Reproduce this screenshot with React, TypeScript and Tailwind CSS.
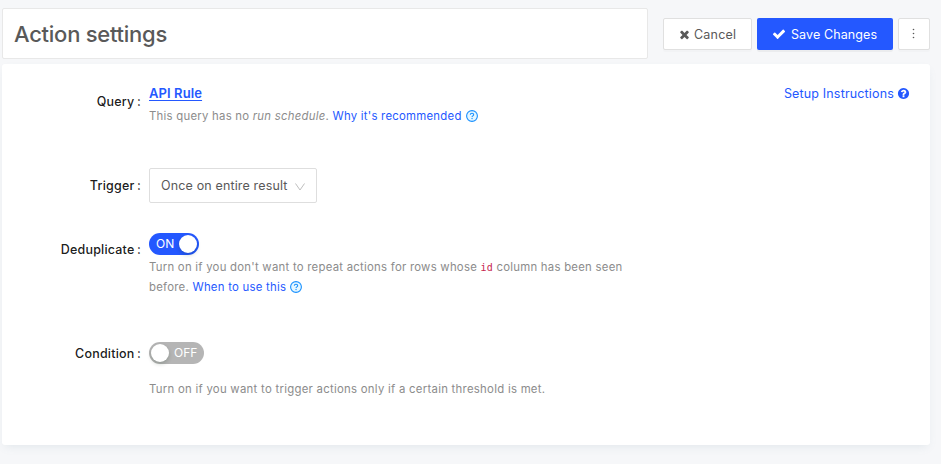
import type { ReactNode } from "react";

function Glyph({ d, className }: { d: string; className: string }) {
  return (
    <svg viewBox="0 0 1792 1792" fill="currentColor" className={className} aria-hidden="true">
      <path d={d} />
    </svg>
  );
}

const TIMES =
  "M1490 1322q0 40-28 68l-136 136q-28 28-68 28t-68-28l-294-294-294 294q-28 28-68 28t-68-28l-136-136q-28-28-28-68t28-68l294-294-294-294q-28-28-28-68t28-68l136-136q28-28 68-28t68 28l294 294 294-294q28-28 68-28t68 28l136 136q28 28 28 68t-28 68l-294 294 294 294q28 28 28 68z";
const CHECK =
  "M1671 566q0 40-28 68l-724 724-136 136q-28 28-68 28t-68-28l-136-136-362-362q-28-28-28-68t28-68l136-136q28-28 68-28t68 28l294 295 656-657q28-28 68-28t68 28l136 136q28 28 28 68z";
const QUESTION =
  "M1024 1376v-192q0-14-9-23t-23-9h-192q-14 0-23 9t-9 23v192q0 14 9 23t23 9h192q14 0 23-9t9-23zm256-672q0-88-55.5-163t-138.5-116-170-41q-243 0-371 213-15 24 8 42l132 100q7 6 19 6 16 0 25-12 53-68 86-92 34-24 86-24 48 0 85.500 26t37.500 59q0 38-20 61t-68 45q-63 28-115.500 86.500t-52.500 125.500v36q0 14 9 23t23 9h192q14 0 23-9t9-23q0-19 21.500-49.500t54.500-49.500q32-18 49-28.500t46-35 44.500-48 28-60.500 12.500-81zm384 192q0 209-103 385.500t-279.500 279.500-385.500 103-385.500-103-279.500-279.500-103-385.500 103-385.500 279.500-279.500 385.500-103 385.500 103 279.500 279.500 103 385.500z";

function HelpCircle() {
  return (
    <svg viewBox="0 0 12 12" className="block h-3 w-3" fill="none" aria-hidden="true">
      <circle cx="6" cy="6" r="5.4" fill="#e6f7ff" stroke="#1890ff" strokeWidth="1.1" />
      <path d="M4.3 4.8c0-1 .75-1.6 1.7-1.6s1.7.6 1.7 1.5c0 1.2-1.65 1.1-1.65 2.3" stroke="#1890ff" strokeWidth="1.1" />
      <circle cx="6.05" cy="8.5" r=".65" fill="#1890ff" />
    </svg>
  );
}

function Label({ children }: { children: ReactNode }) {
  return (
    <div className="flex w-[139px] shrink-0 justify-end pt-px text-[12.500px] leading-5 font-medium tracking-[0.2px] text-black/90">
      <span>{children}</span>
      <span className="ml-[2.500px]">:</span>
    </div>
  );
}

export default function App() {
  return (
    <div className="h-[464px] w-[941px] overflow-hidden bg-[#f6f7f9] pt-2 pl-[2px] font-['Inter','Liberation_Sans',sans-serif] text-[12.500px] text-[#595959]">
      <header className="flex h-[51px] w-[928px]">
        <div className="flex h-[51px] w-[646px] items-center rounded-[2px] border border-[#e8e8e8] bg-white pl-[11px]">
          <h1 className="text-[22px] leading-7 font-medium tracking-[-0.26px] text-[#595959]">Action settings</h1>
        </div>
        <div className="mt-[10px] ml-[15px] flex h-8 gap-[5px]">
          <button className="flex w-[89px] items-center rounded-[2px] border border-[#e0e0e0] bg-white pl-[14px] shadow-[0_2px_0_rgba(0,0,0,0.015)]">
            <Glyph d={TIMES} className="h-[13px] w-[13px]" />
            <span className="ml-[3px] pt-[3px] tracking-[0.2px]">Cancel</span>
          </button>
          <button className="flex w-[136px] items-center rounded-[2px] bg-[#2458ff] pl-[15px] text-white shadow-[0_2px_0_rgba(0,0,0,0.045)]">
            <Glyph d={CHECK} className="h-[14px] w-[14px]" />
            <span className="ml-[5px] pt-[3px] tracking-[0.1px]">Save Changes</span>
          </button>
          <button className="flex w-8 items-center justify-center rounded-[2px] border border-[#e0e0e0] bg-white shadow-[0_2px_0_rgba(0,0,0,0.015)]" aria-label="More">
            <svg viewBox="0 0 12 12" className="mb-px h-3 w-3" fill="currentColor">
              <circle cx="5.5" cy="1.500" r=".8" />
              <circle cx="5.5" cy="5.500" r=".8" />
              <circle cx="5.5" cy="9.500" r=".8" />
            </svg>
          </button>
        </div>
      </header>

      <main className="mt-[5px] h-[381px] w-[928px] rounded-[3px] bg-white pt-[19px] shadow-[0_4px_9px_-3px_rgba(102,136,153,0.15)]">
        <section className="flex h-[86px]">
          <div className="pt-2"><Label>Query</Label></div>
          <div className="ml-2 flex-1">
            <a className="block text-[13px] leading-5 font-semibold tracking-[0.1px] text-[#2458ff] underline underline-offset-2">API Rule</a>
            <div className="mt-[3px] flex h-5 items-center text-[11.375px] tracking-[0.25px] text-[#8c8c8c]">
              <span className="pt-[2px] whitespace-pre">This query has no <em>run schedule</em>. <a className="text-[#2458ff]">Why it's recommended</a></span>
              <span className="ml-1"><HelpCircle /></span>
            </div>
          </div>
          <a className="mr-5 flex h-5 items-center text-[#2458ff]">
            <span className="pt-[3px] tracking-[0.16px]">Setup Instructions</span>
            <Glyph d={QUESTION} className="ml-[3px] h-[13px] w-[13px]" />
          </a>
        </section>

        <section className="flex h-[65px]">
          <div className="pt-[6px]"><Label>Trigger</Label></div>
          <div className="-mt-px ml-2 flex h-[35px] w-[168px] items-center rounded-[2px] border border-[#dedede] bg-white pl-[11px]">
            <span className="pt-[2px] tracking-[0.15px]">Once on entire result</span>
            <svg viewBox="0 0 10 8" className="mt-[3px] ml-[7px] h-2 w-[10px]" fill="none" stroke="#bfbfbf">
              <path d="M.5.5 5 7 9.500.5" />
            </svg>
          </div>
        </section>

        <section className="flex h-[109px]">
          <div className="pt-[5px]"><Label>Deduplicate</Label></div>
          <div className="-mt-px ml-2">
            <div className="flex h-[22px] w-[50px] items-center rounded-full bg-[#2458ff] pr-[2px] pl-[7px] text-xs text-white">
              <span>ON</span>
              <span className="ml-auto h-[18px] w-[18px] rounded-full bg-white shadow-[0_2px_4px_rgba(0,35,11,0.2)]" />
            </div>
            <div className="mt-[2px] text-[11.375px] leading-5 tracking-[0.25px] text-[#8c8c8c]">
              <p className="h-[19px] whitespace-pre">Turn on if you don't want to repeat actions for rows whose <code className="font-['DejaVu_Sans_Mono','Liberation_Mono',monospace] text-[10px] text-[#c7254e]">id</code> column has been seen</p>
              <p className="flex items-center">
                <span className="pt-px whitespace-pre">before. <a className="text-[#2458ff]">When to use this</a></span>
                <span className="ml-1"><HelpCircle /></span>
              </p>
            </div>
          </div>
        </section>

        <section className="flex">
          <div><Label>Condition</Label></div>
          <div className="-mt-px ml-2">
            <div className="flex h-[22px] w-[55px] items-center rounded-full bg-[#b5b5b5] pl-[2px] text-xs text-white">
              <span className="h-[18px] w-[18px] rounded-full bg-white shadow-[0_2px_4px_rgba(0,35,11,0.2)]" />
              <span className="ml-[5px]">OFF</span>
            </div>
            <p className="mt-[15px] text-[11.375px] leading-5 tracking-[0.27px] whitespace-nowrap text-[#8c8c8c]">Turn on if you want to trigger actions only if a certain threshold is met.</p>
          </div>
        </section>
      </main>
    </div>
  );
}
